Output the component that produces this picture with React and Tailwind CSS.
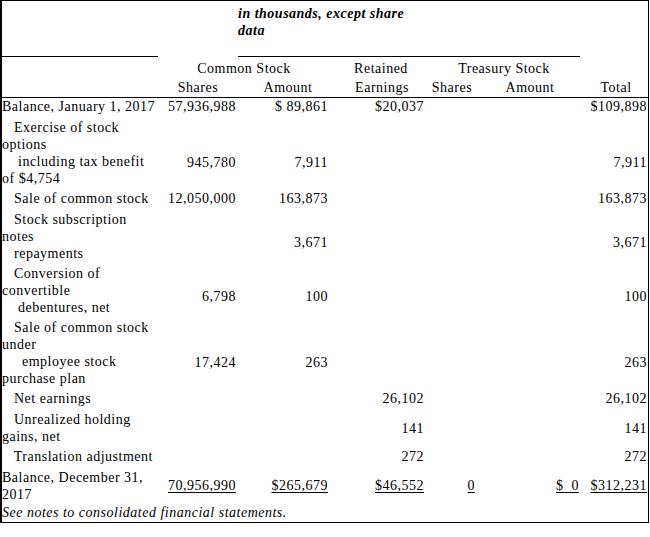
import React from 'react';

const cols = 'grid grid-cols-[156px_80px_92px_96px_52px_104px_66px]';

// rows of the equity statement; "top" pushes the figures down to the line they sit on
const rows = [
  {
    label: ['Balance, January 1, 2017'],
    shares: '57,936,988',
    amount: '$ 89,861',
    retained: '$20,037',
    total: '$109,898',
  },
  {
    label: ['   Exercise of stock', 'options', '    including tax benefit', 'of $4,754'],
    shares: '945,780',
    amount: '7,911',
    total: '7,911',
    top: 'pt-[35px]',
  },
  {
    label: ['   Sale of common stock'],
    shares: '12,050,000',
    amount: '163,873',
    total: '163,873',
  },
  {
    label: ['   Stock subscription', 'notes', '   repayments'],
    amount: '3,671',
    total: '3,671',
    top: 'pt-[23px]',
  },
  {
    label: ['   Conversion of', 'convertible', '    debentures, net'],
    shares: '6,798',
    amount: '100',
    total: '100',
    top: 'pt-[23px]',
  },
  {
    label: ['   Sale of common stock', 'under', '     employee stock', 'purchase plan'],
    shares: '17,424',
    amount: '263',
    total: '263',
    top: 'pt-[35px]',
  },
  {
    label: ['   Net earnings'],
    retained: '26,102',
    total: '26,102',
  },
  {
    label: ['   Unrealized holding', 'gains, net'],
    retained: '141',
    total: '141',
    top: 'pt-[9px]',
  },
  {
    label: ['   Translation adjustment'],
    retained: '272',
    total: '272',
  },
];

const Num = ({ children, top = '', pr = 'pr-[2px]', line = false }) => (
  <div className={`text-right ${pr} ${top}`}>
    <span className={line ? 'underline underline-offset-2 whitespace-pre' : ''}>{children}</span>
  </div>
);

const App = () => {
  return (
    <div className="min-h-screen bg-white">
      <div
        className="w-[649px] h-[523px] overflow-hidden border-t border-r border-b border-l-2 border-black text-black text-[14px] leading-[17px] tracking-[0.5px]"
        style={{ fontFamily: '"Liberation Serif", "Times New Roman", serif' }}
      >
        {/* header */}
        <div className={`${cols} h-[56px]`}>
          <div className="border-b border-black" />
          <div />
          <div className="col-span-4 border-b border-black mr-[2px] pt-[4px]">
            <div className="w-[182px] font-bold italic">in thousands, except share data</div>
          </div>
          <div />
        </div>
        <div className={`${cols} pt-[3px]`}>
          <div />
          <div className="col-span-2 text-center">Common Stock</div>
          <div className="text-center pl-[6px]">Retained</div>
          <div className="col-span-2 text-center">Treasury Stock</div>
          <div />
        </div>
        <div className={`${cols} pt-[2px] pb-[1px] border-b border-black`}>
          <div />
          <div className="text-center">Shares</div>
          <div className="text-center pl-[8px]">Amount</div>
          <div className="text-center pl-[8px]">Earnings</div>
          <div className="text-center">Shares</div>
          <div className="text-center">Amount</div>
          <div className="text-center pl-[2px]">Total</div>
        </div>

        {/* body */}
        {rows.map((r, i) => (
          <div key={i} className={`${cols} ${r.label.length === 1 ? 'pb-[4px]' : 'pb-[3px]'}`}>
            <div>
              {r.label.map((l, j) => (
                <div key={j} className="whitespace-pre">{l}</div>
              ))}
            </div>
            <Num top={r.top}>{r.shares}</Num>
            <Num top={r.top}>{r.amount}</Num>
            <Num top={r.top}>{r.retained}</Num>
            <Num top={r.top} pr="pr-[3px]" />
            <Num top={r.top} pr="pr-[3px]" />
            <Num top={r.top} pr="pr-[1px]">{r.total}</Num>
          </div>
        ))}

        <div className={`${cols} pb-[1px]`}>
          <div>
            <div>Balance, December 31,</div>
            <div>2017</div>
          </div>
          <Num top="pt-[8px]" line>70,956,990</Num>
          <Num top="pt-[8px]" line>$265,679</Num>
          <Num top="pt-[8px]" line>$46,552</Num>
          <Num top="pt-[8px]" pr="pr-[3px]" line>0</Num>
          <Num top="pt-[8px]" pr="pr-[3px]" line>$  0</Num>
          <Num top="pt-[8px]" pr="pr-[1px]" line>$312,231</Num>
        </div>
        <div className="italic">See notes to consolidated financial statements.</div>
      </div>
    </div>
  );
};

export default App;
